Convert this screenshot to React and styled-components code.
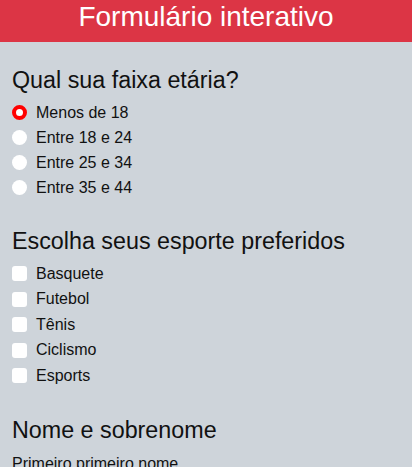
import React, { useState } from 'react';
import styled, { createGlobalStyle } from 'styled-components';

const ageOptions = ['Menos de 18', 'Entre 18 e 24', 'Entre 25 e 34', 'Entre 35 e 44'];
const sportOptions = ['Basquete', 'Futebol', 'Tênis', 'Ciclismo', 'Esports'];

function App() {
  const [age, setAge] = useState(0);
  const [sports, setSports] = useState([]);

  const toggleSport = (index) => {
    setSports((prev) =>
      prev.includes(index) ? prev.filter((i) => i !== index) : [...prev, index],
    );
  };

  return (
    <>
      <GlobalStyle />
      <Header>Formulário interativo</Header>
      <Form>
        <Section>
          <Title>Qual sua faixa etária?</Title>
          <OptionList>
            {ageOptions.map((option, index) => (
              <Option key={option} rowHeight={25}>
                <Radio
                  type="radio"
                  name="age"
                  checked={age === index}
                  onChange={() => setAge(index)}
                />
                {option}
              </Option>
            ))}
          </OptionList>
        </Section>

        <Section>
          <Title>Escolha seus esporte preferidos</Title>
          <OptionList>
            {sportOptions.map((option, index) => (
              <Option key={option} rowHeight={25.5}>
                <Checkbox
                  type="checkbox"
                  checked={sports.includes(index)}
                  onChange={() => toggleSport(index)}
                />
                {option}
              </Option>
            ))}
          </OptionList>
        </Section>

        <Section>
          <Title>Nome e sobrenome</Title>
          <FieldLabel>Primeiro primeiro nome</FieldLabel>
        </Section>
      </Form>
    </>
  );
}

const GlobalStyle = createGlobalStyle`
  body {
    margin: 0;
    background: #ced4da;
    font-family: 'Liberation Sans', Arial, sans-serif;
    color: #111;
  }
`;

const Header = styled.header`
  height: 42px;
  background: #dc3545;
  color: #fff;
  font-size: 28px;
  line-height: 33px;
  text-align: center;
`;

const Form = styled.form`
  display: flex;
  flex-direction: column;
  gap: 27px;
  padding: 24px 12px 0;
`;

const Section = styled.section`
  display: flex;
  flex-direction: column;
`;

const Title = styled.h2`
  margin: 0 0 6px;
  font-size: 23.3px;
  font-weight: 400;
  line-height: 28px;
`;

const OptionList = styled.div`
  display: flex;
  flex-direction: column;
`;

const Option = styled.label`
  display: flex;
  align-items: center;
  height: ${(props) => props.rowHeight}px;
  font-size: 16px;
`;

const Radio = styled.input`
  appearance: none;
  box-sizing: border-box;
  margin: 0 9px 0 0;
  width: 15px;
  height: 15px;
  border-radius: 50%;
  background: #fff;
  flex-shrink: 0;

  &:checked {
    border: 4.5px solid #ff0000;
  }
`;

const Checkbox = styled.input`
  appearance: none;
  box-sizing: border-box;
  margin: 0 9px 0 0;
  width: 15px;
  height: 15px;
  border-radius: 3px;
  background: #fff;
  flex-shrink: 0;

  &:checked {
    background: #dc3545;
  }
`;

const FieldLabel = styled.label`
  margin-top: 5px;
  font-size: 16px;
`;

export default App;
